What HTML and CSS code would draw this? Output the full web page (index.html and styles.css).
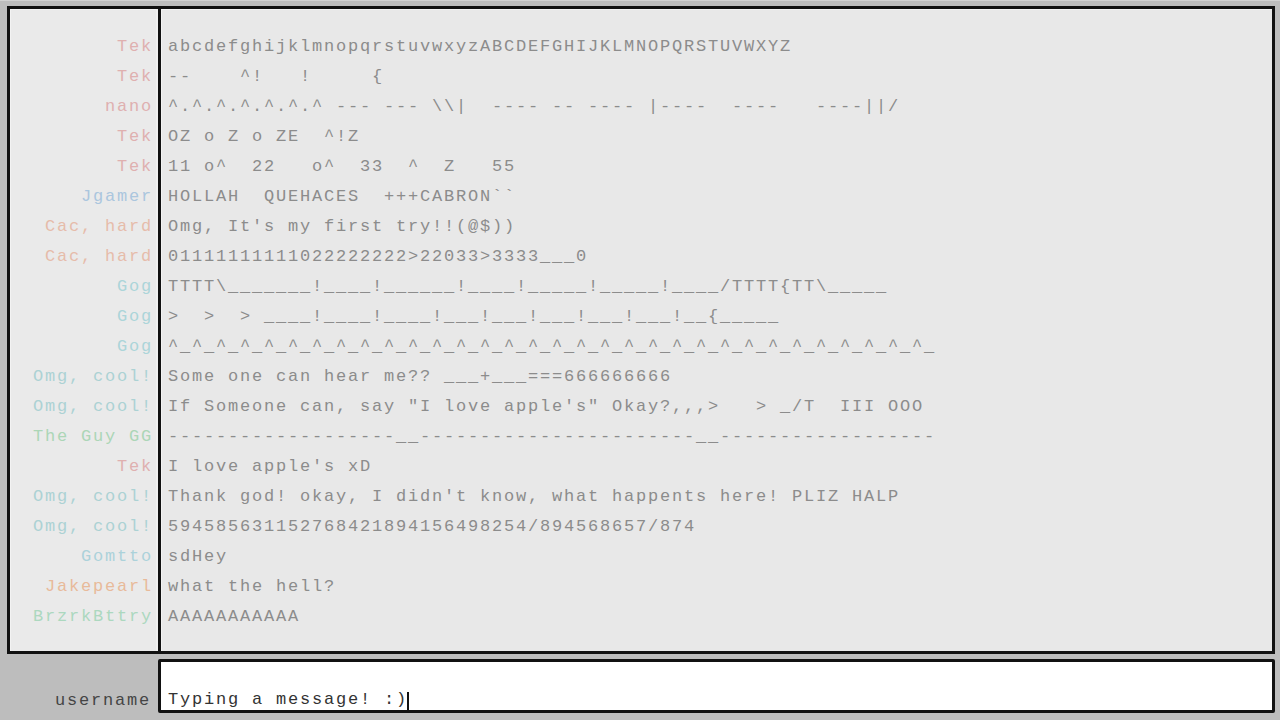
FILE: index.html
```html
<!DOCTYPE html>
<html>
<head>
<meta charset="utf-8">
<link rel="stylesheet" href="styles.css">
</head>
<body>
<div class="screen">
  <div class="panel">
    <div class="names">
      <div class="row c-tek">Tek</div>
      <div class="row c-tek">Tek</div>
      <div class="row c-tek">nano</div>
      <div class="row c-tek">Tek</div>
      <div class="row c-tek">Tek</div>
      <div class="row c-jgamer">Jgamer</div>
      <div class="row c-cac">Cac, hard</div>
      <div class="row c-cac">Cac, hard</div>
      <div class="row c-gog">Gog</div>
      <div class="row c-gog">Gog</div>
      <div class="row c-gog">Gog</div>
      <div class="row c-omg">Omg, cool!</div>
      <div class="row c-omg">Omg, cool!</div>
      <div class="row c-guy">The Guy GG</div>
      <div class="row c-tek">Tek</div>
      <div class="row c-omg">Omg, cool!</div>
      <div class="row c-omg">Omg, cool!</div>
      <div class="row c-gomtto">Gomtto</div>
      <div class="row c-jake">Jakepearl</div>
      <div class="row c-brz">BrzrkBttry</div>
    </div>
    <div class="msgs">
      <div class="row">abcdefghijklmnopqrstuvwxyzABCDEFGHIJKLMNOPQRSTUVWXYZ</div>
      <div class="row">--    ^!   !     {</div>
      <div class="row">^.^.^.^.^.^.^ --- --- \\|  ---- -- ---- |----  ----   ----||/</div>
      <div class="row">OZ o Z o ZE  ^!Z</div>
      <div class="row">11 o^  22   o^  33  ^  Z   55</div>
      <div class="row">HOLLAH  QUEHACES  +++CABRON``</div>
      <div class="row">Omg, It's my first try!!(@$))</div>
      <div class="row">01111111111022222222>22033>3333___0</div>
      <div class="row">TTTT\_______!____!______!____!_____!_____!____/TTTT{TT\_____</div>
      <div class="row">&gt;  &gt;  &gt; ____!____!____!___!___!___!___!___!__{_____</div>
      <div class="row">^_^_^_^_^_^_^_^_^_^_^_^_^_^_^_^_^_^_^_^_^_^_^_^_^_^_^_^_^_^_^_^_</div>
      <div class="row">Some one can hear me?? ___+___===666666666</div>
      <div class="row">If Someone can, say "I love apple's" Okay?,,,&gt;   &gt; _/T  III OOO</div>
      <div class="row">-------------------__-----------------------__------------------</div>
      <div class="row">I love apple's xD</div>
      <div class="row">Thank god! okay, I didn't know, what happents here! PLIZ HALP</div>
      <div class="row">594585631152768421894156498254/894568657/874</div>
      <div class="row">sdHey</div>
      <div class="row">what the hell?</div>
      <div class="row">AAAAAAAAAAA</div>
    </div>
  </div>
  <div class="input-row">
    <div class="label">username</div>
    <div class="input"><span class="typed">Typing a message! :)</span><span class="caret"></span></div>
  </div>
</div>
</body>
</html>
```
FILE: styles.css
```css
html, body {
  margin: 0;
  padding: 0;
  background: #bdbdbd;
}
body {
  width: 1280px;
  height: 720px;
  overflow: hidden;
  font-family: "Liberation Mono", "DejaVu Sans Mono", monospace;
  font-size: 17px;
  letter-spacing: 1.8px;
}
.screen {
  padding: 5px 5px 0 7px;
  display: flex;
  flex-direction: column;
  border-top: 1px solid #d2d2d2;
  box-sizing: border-box;
  height: 720px;
}
.panel {
  display: flex;
  border: 3px solid #111;
  background: #e8e8e8;
  height: 648px;
  box-sizing: border-box;
}
.names {
  width: 151px;
  border-right: 3px solid #111;
  box-shadow: inset -2px 0 0 #f0f0f0, inset 1px 1px 0 #f3f3f3;
  background: #eaeaea;
  padding: 23px 5px 0 0;
  box-sizing: border-box;
  text-align: right;
}
.msgs {
  flex: 1;
  padding: 23px 0 0 7px;
  color: #8c8c8c;
  box-shadow: inset 1px 1px 0 #f3f3f3;
}
.row {
  height: 30px;
  line-height: 30px;
  white-space: pre;
}
.c-tek { color: #dfb0b0; }
.c-jgamer { color: #abc6de; }
.c-cac { color: #e6bcaa; }
.c-gog { color: #acd5d9; }
.c-omg { color: #acd2d4; }
.c-guy { color: #acd6b7; }
.c-gomtto { color: #acd2da; }
.c-jake { color: #e8ba9a; }
.c-brz { color: #acd8bf; }
.input-row {
  display: flex;
  margin-top: 5px;
  height: 54px;
}
.label {
  width: 144px;
  padding-right: 7px;
  text-align: right;
  color: #454545;
  display: flex;
  align-items: flex-end;
  justify-content: flex-end;
  line-height: 20px;
  padding-bottom: 2px;
}
.input {
  flex: 1;
  background: #fff;
  border: 3px solid #111;
  border-radius: 2px;
  display: flex;
  align-items: flex-end;
  padding: 0 0 0 7px;
  line-height: 20px;
  color: #333;
  white-space: pre;
}
.caret {
  display: inline-block;
  width: 2px;
  height: 18px;
  background: #111;
  margin-bottom: 0;
  margin-left: -1px;
}
```
